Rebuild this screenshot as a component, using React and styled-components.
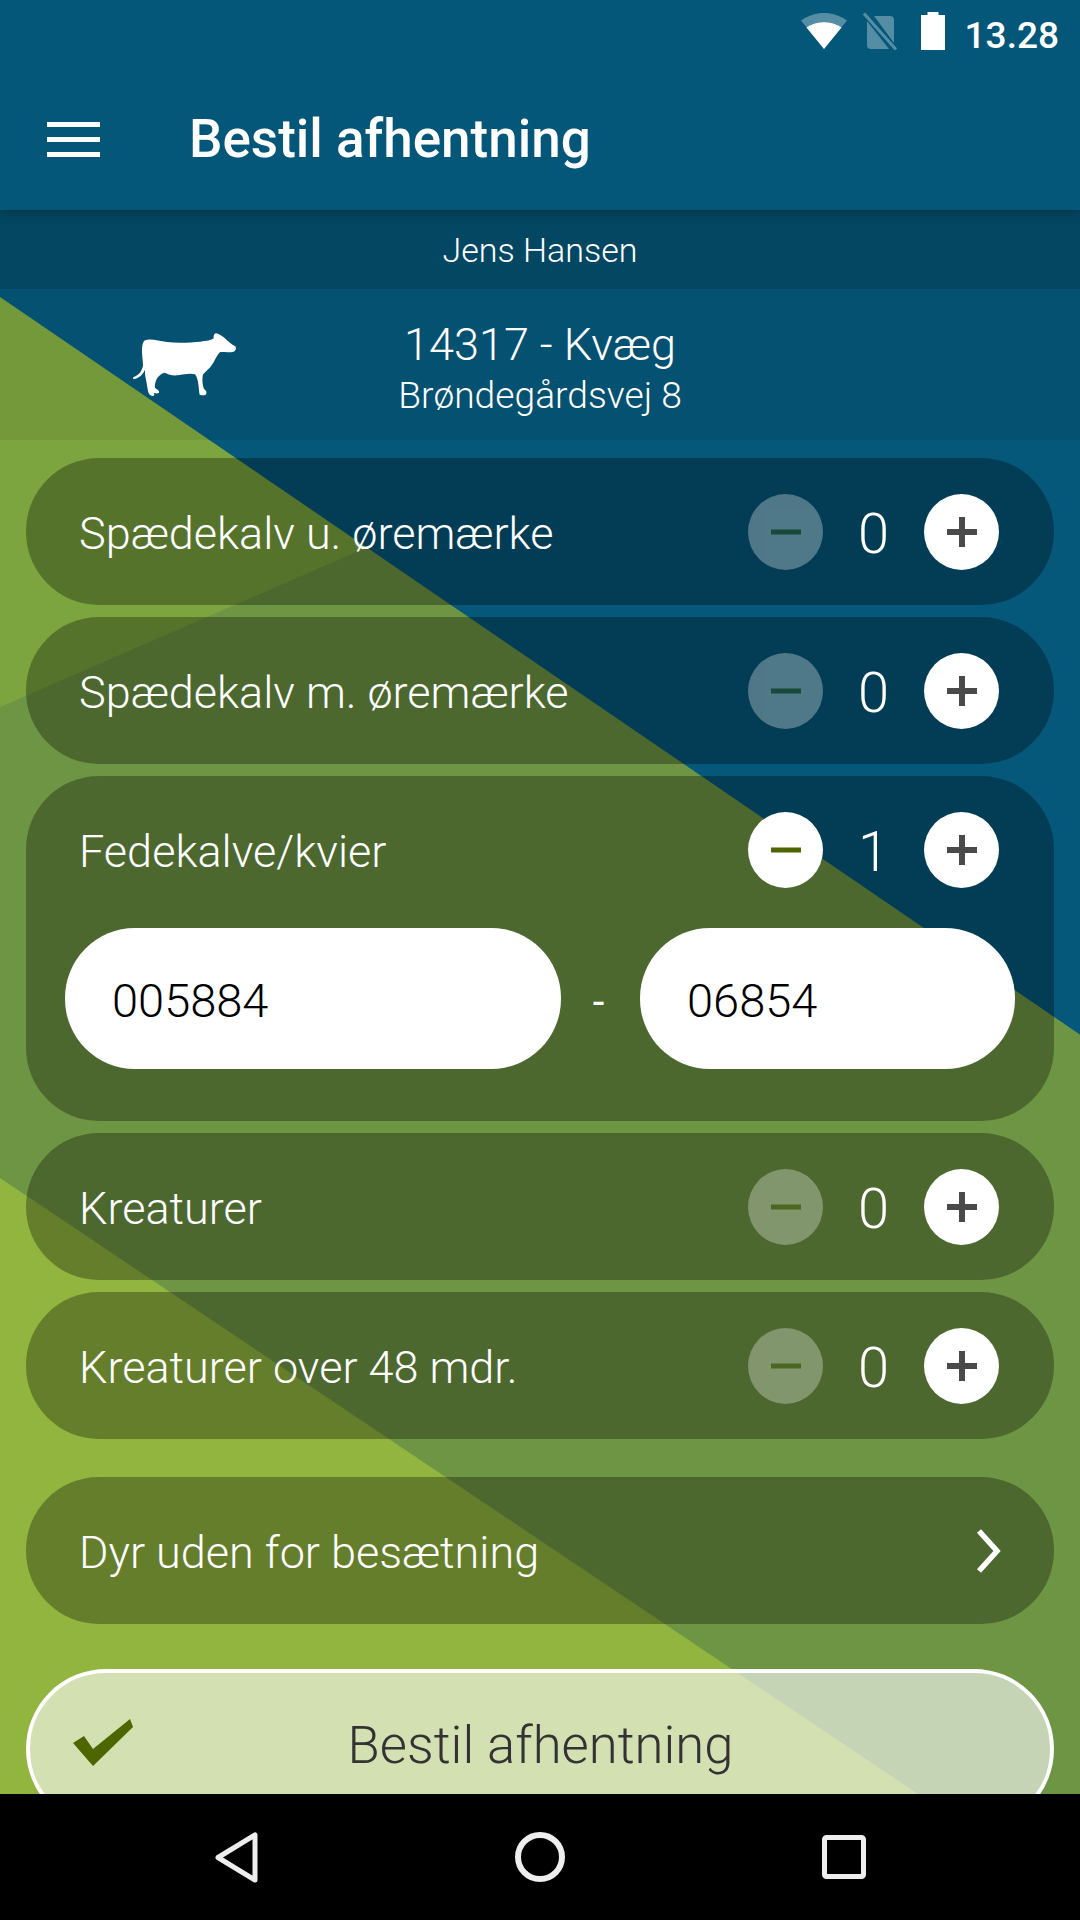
import React from 'react';
import styled, { createGlobalStyle } from 'styled-components';

const W = 1080;
const H = 1920;
const edge = (y0, m, color, above = false) => {
  const n = Math.hypot(m, 1);
  const dx = m / n;
  const dy = -1 / n;
  const theta = Math.atan2(dx, -dy);
  const L = W * Math.abs(Math.sin(theta)) + H * Math.abs(Math.cos(theta));
  const s = (0 - W / 2) * dx + (y0 - H / 2) * dy + L / 2;
  const deg = (theta * 180) / Math.PI;
  return above
    ? `linear-gradient(${deg}deg, transparent ${s - 0.5}px, ${color} ${s + 0.5}px)`
    : `linear-gradient(${deg}deg, ${color} ${s - 0.5}px, transparent ${s + 0.5}px)`;
};

const backdrop = [
  edge(297, 0.683, '#05587a', true),
  edge(1178, 0.671, '#91b53f'),
  edge(707, -0.435, '#6e9544'),
  'linear-gradient(#7ca540, #7ca540)',
].join(', ');

const Global = createGlobalStyle`
  html, body { margin: 0; padding: 0; background: #000; }
  body { font-family: Roboto, "Liberation Sans", sans-serif; }
  * { box-sizing: border-box; }
`;

const Screen = styled.div`
  width: 1080px;
  height: 1920px;
  display: flex;
  flex-direction: column;
  overflow: hidden;
  background-image: ${backdrop};
  color: #fff;
`;

const TopBar = styled.header`
  height: 210px;
  flex: none;
  background: #05577a;
  box-shadow: 0 3px 10px rgba(0, 0, 0, 0.28);
  position: relative;
  z-index: 1;
  display: flex;
  flex-direction: column;
`;

const StatusBar = styled.div`
  height: 72px;
  display: flex;
  justify-content: flex-end;
  align-items: flex-start;
  padding: 12px 21px 0 0;
`;

const StatusIcon = styled.svg`
  display: block;
  flex: none;
  margin-right: ${(p) => p.$gap}px;
`;

const Clock = styled.span`
  font-size: 37px;
  font-weight: 500;
  line-height: 42px;
  margin-left: 1px;
  margin-top: 3px;
`;

const AppBar = styled.div`
  flex: 1;
  display: flex;
  align-items: center;
  padding: 0 0 0 47px;
  margin-top: -4px;
`;

const Burger = styled.div`
  width: 53px;
  height: 35px;
  margin-right: 90px;
  display: flex;
  flex-direction: column;
  justify-content: space-between;
  span { display: block; height: 5px; background: #fff; }
`;

const Title = styled.h1`
  margin: 0;
  font-size: 53px;
  font-weight: 500;
  line-height: 60px;
  transform: translateX(-1px);
`;

const Owner = styled.div`
  height: 79px;
  flex: none;
  display: flex;
  align-items: center;
  justify-content: center;
  background: rgba(0, 0, 0, 0.19);
  font-size: 34px;
  font-weight: 300;
`;

const Info = styled.section`
  height: 151px;
  flex: none;
  display: grid;
  grid-template-columns: 1fr auto 1fr;
  align-items: center;
  background: rgba(0, 0, 0, 0.07);
`;

const CowIcon = styled.svg`
  display: block;
  margin-left: 132px;
`;

const InfoText = styled.div`
  text-align: center;
  font-weight: 300;
  padding-top: 7px;
`;

const Herd = styled.div`
  font-size: 45px;
  line-height: 54px;
`;

const Address = styled.div`
  font-size: 37.2px;
  line-height: 47px;
`;

const List = styled.main`
  flex: 1;
  min-height: 0;
  overflow: hidden;
  display: flex;
  flex-direction: column;
  gap: 12px;
  padding: 18px 26px 0;
`;

const Pill = styled.div`
  flex: none;
  background: rgba(0, 0, 0, 0.3);
  border-radius: 73px;
  margin-top: ${(p) => p.$top || 0}px;
  padding-bottom: ${(p) => p.$bottom || 0}px;
`;

const Row = styled.div`
  height: 147px;
  display: flex;
  align-items: center;
  justify-content: space-between;
  padding: 0 55px 0 53px;
`;

const Label = styled.span`
  font-size: 45px;
  font-weight: 300;
  padding-top: 4px;
`;

const Controls = styled.div`
  display: flex;
  align-items: center;
`;

const RoundButton = styled.button`
  width: 75px;
  height: 76px;
  border: 0;
  padding: 0;
  border-radius: 50%;
  background: #fff;
  display: flex;
  align-items: center;
  justify-content: center;
  opacity: ${(p) => (p.$off ? 0.3 : 1)};
`;

const Count = styled.span`
  width: 101px;
  text-align: center;
  font-size: 56px;
  font-weight: 300;
  padding-top: 5px;
`;

const Numbers = styled.div`
  display: grid;
  grid-template-columns: 496px 79px 375px;
  align-items: center;
  margin: 5px 39px 0;
`;

const Field = styled.div`
  height: 141px;
  border-radius: 70px;
  background: #fff;
  color: #000;
  font-size: 47px;
  font-weight: 300;
  display: flex;
  align-items: center;
  padding: 3px 0 0 ${(p) => p.$pad}px;
`;

const Dash = styled.span`
  text-align: center;
  font-size: 42px;
  font-weight: 400;
  padding-top: 6px;
  transform: translateX(-2px);
`;

const SubmitButton = styled.button`
  flex: none;
  margin-top: 33px;
  width: 100%;
  height: 160px;
  border: 4px solid #fff;
  border-radius: 80px;
  background: rgba(255, 255, 255, 0.6);
  color: #333;
  display: grid;
  grid-template-columns: 1fr auto 1fr;
  align-items: start;
  padding: 41px 0 0 43px;
  font-family: inherit;
  font-size: 52.6px;
  font-weight: 300;
  line-height: 62px;
  text-align: center;
`;

const CheckIcon = styled.svg`
  display: block;
  margin-top: 5px;
`;

const SubmitLabel = styled.span`
  transform: translateX(-21px);
`;

const ChevronIcon = styled.svg`
  display: block;
  margin-right: -3px;
`;

const NavBar = styled.nav`
  height: 126px;
  flex: none;
  background: #000;
`;

const NavIcons = styled.svg`
  display: block;
  width: 100%;
  height: 100%;
`;

const Plus = () => (
  <svg width="30" height="30" viewBox="0 0 30 30">
    <path d="M12 0h6v12h12v6H18v12h-6V18H0v-6h12z" fill="#4a4a4a" />
  </svg>
);

const Minus = () => (
  <svg width="30" height="6" viewBox="0 0 30 6">
    <rect width="30" height="5" y="0.5" fill="#4d6600" />
  </svg>
);

const Stepper = ({ value }) => (
  <Controls>
    <RoundButton $off={value === 0}><Minus /></RoundButton>
    <Count>{value}</Count>
    <RoundButton><Plus /></RoundButton>
  </Controls>
);

const Counter = ({ label, value }) => (
  <Row>
    <Label>{label}</Label>
    <Stepper value={value} />
  </Row>
);

const Cow = () => (
  <CowIcon width="105" height="65" viewBox="95 65 315 195">
    <path
      fill="#fff"
      d="M134 90 C150 84 175 92 200 95 C235 99 275 96 300 94 C320 92 332 90 340 84 C339 76 341 70 347 69 C355 70 362 76 372 82 C382 92 394 102 405 108 C409 114 407 121 400 124 C388 127 372 125 360 125 C350 132 345 150 332 168 C322 180 310 188 307 196 C305 212 307 226 311 236 C316 240 320 244 318 250 C316 256 306 256 298 253 C296 246 296 236 294 222 C292 208 290 200 284 192 C268 188 252 192 232 195 C214 197 200 190 192 187 C182 190 172 198 168 208 C164 218 162 228 165 234 C172 238 178 242 176 248 C172 250 166 250 160 247 C163 252 163 256 157 257 C149 257 145 250 143 242 C140 228 139 216 136 204 C134 194 134 186 134 178 C128 192 116 204 100 206 C96 204 98 200 102 199 C116 194 124 182 128 166 C128 150 124 132 125 116 C126 104 128 94 134 90 Z"
    />
  </CowIcon>
);

const Chevron = () => (
  <ChevronIcon width="26" height="46" viewBox="0 0 26 46">
    <path d="M3 3 L21 23 L3 43" fill="none" stroke="#fff" strokeWidth="5.5" />
  </ChevronIcon>
);

export default function App() {
  return (
    <Screen>
      <Global />
      <TopBar>
        <StatusBar>
          <StatusIcon $gap={16} width="46" height="38" viewBox="0 0 46 38">
            <path d="M0 8.5 C14 -1.5 32 -1.5 46 8.5 L23 37 Z" fill="#fff" fillOpacity="0.32" />
            <path d="M5.5 15.5 C16 8.5 30 8.5 40.5 15.5 L23 37 Z" fill="#fff" />
          </StatusIcon>
          <StatusIcon $gap={22} width="36" height="38" viewBox="0 0 36 38">
            <path d="M6 4 H27 Q31 4 31 8 V31 L11 4 Z M4 9 L26 37 H8 Q4 37 4 33 Z" fill="#fff" fillOpacity="0.32" />
            <path d="M1 1.5 L33 37.5" stroke="#fff" strokeOpacity="0.32" strokeWidth="3" />
          </StatusIcon>
          <StatusIcon $gap={19} width="24" height="38" viewBox="0 0 24 38">
            <path d="M6.5 0 H17.5 V3 H24 V38 H0 V3 H6.5 Z" fill="#fff" />
          </StatusIcon>
          <Clock>13.28</Clock>
        </StatusBar>
        <AppBar>
          <Burger><span /><span /><span /></Burger>
          <Title>Bestil afhentning</Title>
        </AppBar>
      </TopBar>

      <Owner>Jens Hansen</Owner>

      <Info>
        <Cow />
        <InfoText>
          <Herd>14317 - Kvæg</Herd>
          <Address>Brøndegårdsvej 8</Address>
        </InfoText>
        <span />
      </Info>

      <List>
        <Pill><Counter label="Spædekalv u. øremærke" value={0} /></Pill>
        <Pill><Counter label="Spædekalv m. øremærke" value={0} /></Pill>
        <Pill $bottom={52}>
          <Counter label="Fedekalve/kvier" value={1} />
          <Numbers>
            <Field $pad={47}>005884</Field>
            <Dash>-</Dash>
            <Field $pad={47}>06854</Field>
          </Numbers>
        </Pill>
        <Pill><Counter label="Kreaturer" value={0} /></Pill>
        <Pill><Counter label="Kreaturer over 48 mdr." value={0} /></Pill>
        <Pill $top={26}>
          <Row>
            <Label>Dyr uden for besætning</Label>
            <Chevron />
          </Row>
        </Pill>
        <SubmitButton>
          <CheckIcon width="60" height="47" viewBox="0 0 60 47">
            <path d="M0 24 L11 17 L20 30 L57 0 L60 8 L20 47 Z" fill="#4d6600" />
          </CheckIcon>
          <SubmitLabel>Bestil afhentning</SubmitLabel>
          <span />
        </SubmitButton>
      </List>

      <NavBar>
        <NavIcons viewBox="0 0 1080 126">
          <path d="M255 41 V86 L218 63.5 Z" fill="none" stroke="#eee" strokeWidth="5" strokeLinejoin="round" />
          <circle cx="540" cy="63" r="22" fill="none" stroke="#eee" strokeWidth="6" />
          <rect x="824.5" y="43.5" width="39" height="39" rx="2" fill="none" stroke="#eee" strokeWidth="5" />
        </NavIcons>
      </NavBar>
    </Screen>
  );
}
